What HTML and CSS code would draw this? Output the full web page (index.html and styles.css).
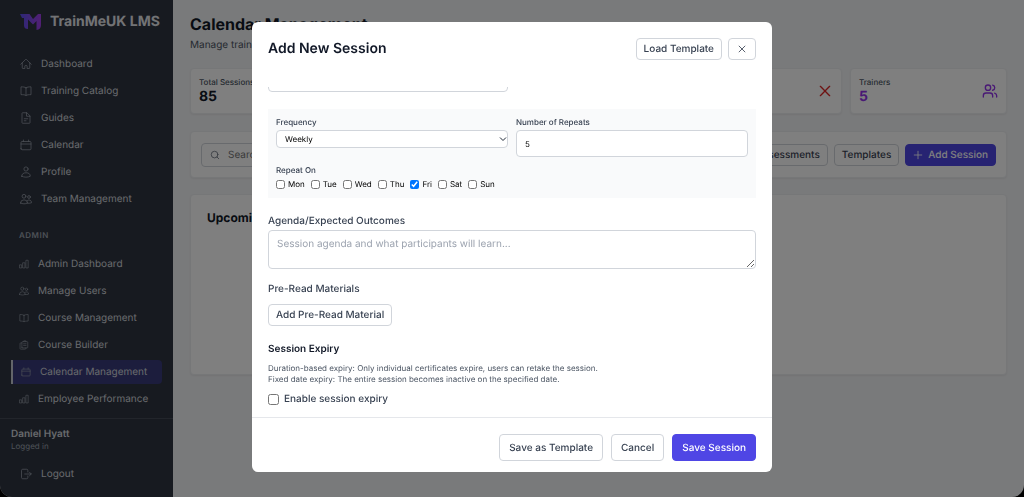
FILE: index.html
```
<!DOCTYPE html>
<html lang="en">
<head>
    <meta charset="UTF-8">
    <meta name="viewport" content="width=device-width, initial-scale=1.0">
    <title>TrainMeUK LMS - Calendar Management</title>
    <link rel="stylesheet" href="styles.css">
</head>
<body>
    <!-- Shared icon shapes -->
    <svg class="sprite" aria-hidden="true">
        <symbol id="i-home" viewBox="0 0 24 24"><path d="M1.500 12.500L11.300 2.800a1 1 0 0 1 1.400 0l9.800 9.700M4.500 9.800v10.100c0 .6.500 1.100 1.100 1.100h4.100v-4.900c0-.6.500-1.100 1.100-1.100h2.300c.6 0 1.100.5 1.100 1.100V21h4.200c.6 0 1.100-.5 1.100-1.100V9.800"/></symbol>
        <symbol id="i-book" viewBox="0 0 24 24"><path d="M12 5.500C10 4 6 3.700 2 3.700v15.600c4 0 8 .2 10 1.700 2-1.500 6-1.700 10-1.700V3.700c-4 0-8 .3-10 1.800zM12 5.500V21"/></symbol>
        <symbol id="i-doc" viewBox="0 0 24 24"><path d="M13 1.500H5.100C4.500 1.500 4 2 4 2.600v18.800c0 .6.500 1.100 1.100 1.100h13.800c.6 0 1.100-.5 1.100-1.100V8.500zM13 1.500v7h7M8.500 13.500h7M8.500 17.500H12"/></symbol>
        <symbol id="i-calendar" viewBox="0 0 24 24"><path d="M6.800 2V5M17.200 2V5M2 19.500V7a2 2 0 0 1 2-2h16a2 2 0 0 1 2 2v12.500a2 2 0 0 1-2 2H4a2 2 0 0 1-2-2zM2 10h20"/></symbol>
        <symbol id="i-user" viewBox="0 0 24 24"><circle cx="12" cy="6" r="4.200"/><path d="M3.500 20.500a8.500 7 0 0 1 17 0c-5 2.500-12 2.500-17 0z"/></symbol>
        <symbol id="i-team" viewBox="0 0 24 24"><circle cx="8" cy="6.500" r="3.800"/><circle cx="18" cy="8" r="2.800"/><path d="M1 20a7 6.300 0 0 1 14 0c-4.200 2.200-9.800 2.200-14 0zM15 20.500c3 .3 5.500 0 8-1a5 5 0 0 0-9-3.500"/></symbol>
        <symbol id="i-chart" viewBox="0 0 24 24"><path d="M2 14h4.500v7.500H2zM9.700 9h4.500v12.500H9.700zM17.500 3H22v18.500h-4.500z"/></symbol>
        <symbol id="i-clip" viewBox="0 0 24 24"><path d="M7 7H4C3.200 7 2.500 7.700 2.500 8.500v12c0 .8.700 1.500 1.500 1.500h11c.8 0 1.500-.7 1.500-1.500V19M7 17.500V5.500C7 4.700 7.700 4 8.500 4h11c.8 0 1.500.7 1.500 1.500v12c0 .8-.7 1.500-1.500 1.500h-11C7.700 19 7 18.300 7 17.500zM11.500 4V2h5v2M11 9h6M11 13h6"/></symbol>
        <symbol id="i-logout" viewBox="0 0 24 24"><path d="M15.700 8V4.700c0-1.200-1-2.200-2.200-2.200H5.300C4 2.500 3 3.500 3 4.700v14.600c0 1.200 1 2.200 2.300 2.200h8.200c1.200 0 2.200-1 2.200-2.200V16M9.500 12H22.500M19 8.500l3.500 3.500-3.500 3.500"/></symbol>
        <symbol id="i-search" viewBox="0 0 24 24"><circle cx="11" cy="11" r="8"/><path d="M21 21l-4.300-4.300"/></symbol>
        <symbol id="i-x" viewBox="0 0 24 24"><path d="M5 5l14 14M19 5L5 19"/></symbol>
        <symbol id="i-plus" viewBox="0 0 24 24"><path d="M12 3v18M3 12h18"/></symbol>
        <symbol id="i-users" viewBox="0 0 24 24"><circle cx="9" cy="7" r="4"/><path d="M16 21v-2a4 4 0 0 0-4-4H6a4 4 0 0 0-4 4v2M22 21v-2a4 4 0 0 0-3-3.900M16 3.100a4 4 0 0 1 0 7.800"/></symbol>
    </svg>

    <div class="app">
        <aside class="sidebar">
            <div class="brand">
                <svg class="logo" viewBox="0 0 22 18" aria-hidden="true">
                    <defs>
                        <linearGradient id="logoFill" x1="0" y1="0" x2="1" y2="0">
                            <stop offset="0" stop-color="#5b52ee"/>
                            <stop offset="1" stop-color="#a33fe8"/>
                        </linearGradient>
                    </defs>
                    <path fill="url(#logoFill)" d="M0 1h9.500l3.500 5 4.500-4.500c.5-.4 1-.5 1.500-.5h2v11c0 3-1.500 4.500-4.500 5V8l-3.500 3.500L8 6.500V16c-2.500 0-4-1-4-3.500V5H2z"/>
                </svg>
                <span>TrainMeUK LMS</span>
            </div>
            <nav class="nav">
                <a href="#"><svg class="icon"><use href="#i-home"/></svg>Dashboard</a>
                <a href="#"><svg class="icon"><use href="#i-book"/></svg>Training Catalog</a>
                <a href="#"><svg class="icon"><use href="#i-doc"/></svg>Guides</a>
                <a href="#"><svg class="icon"><use href="#i-calendar"/></svg>Calendar</a>
                <a href="#"><svg class="icon"><use href="#i-user"/></svg>Profile</a>
                <a href="#"><svg class="icon"><use href="#i-team"/></svg>Team Management</a>
            </nav>
            <h2 class="nav-title">ADMIN</h2>
            <nav class="nav nav-admin">
                <a href="#"><svg class="icon"><use href="#i-chart"/></svg>Admin Dashboard</a>
                <a href="#"><svg class="icon"><use href="#i-team"/></svg>Manage Users</a>
                <a href="#"><svg class="icon"><use href="#i-book"/></svg>Course Management</a>
                <a href="#"><svg class="icon"><use href="#i-clip"/></svg>Course Builder</a>
                <a href="#" class="active"><svg class="icon"><use href="#i-calendar"/></svg>Calendar Management</a>
                <a href="#"><svg class="icon"><use href="#i-chart"/></svg>Employee Performance</a>
            </nav>
            <div class="account">
                <div class="account-name">Daniel Hyatt</div>
                <div class="account-state">Logged in</div>
                <a href="#" class="logout"><svg class="icon"><use href="#i-logout"/></svg>Logout</a>
            </div>
        </aside>

        <main class="content">
            <h1 class="heading">Calendar Management</h1>
            <p class="subheading">Manage training sessions</p>
            <div class="stats">
                <div class="card stat">
                    <div><div class="stat-label">Total Sessions</div><div class="stat-value">85</div></div>
                </div>
                <div class="card stat"></div>
                <div class="card stat"></div>
                <div class="card stat">
                    <div></div>
                    <svg class="icon stat-icon red"><use href="#i-x"/></svg>
                </div>
                <div class="card stat">
                    <div><div class="stat-label">Trainers</div><div class="stat-value purple">5</div></div>
                    <svg class="icon stat-icon purple"><use href="#i-users"/></svg>
                </div>
            </div>
            <div class="card toolbar">
                <label class="search">
                    <svg class="icon"><use href="#i-search"/></svg>
                    <input type="search" placeholder="Search" aria-label="Search sessions">
                </label>
                <button class="btn">Assessments</button>
                <button class="btn">Templates</button>
                <button class="btn btn-primary"><svg class="icon"><use href="#i-plus"/></svg>Add Session</button>
            </div>
            <section class="card upcoming">
                <h2>Upcoming Sessions</h2>
            </section>
        </main>
    </div>

    <div class="overlay">
        <div class="modal" role="dialog" aria-labelledby="modalTitle">
            <header class="modal-header">
                <h2 id="modalTitle">Add New Session</h2>
                <button class="btn">Load Template</button>
                <button class="btn btn-close" aria-label="Close"><svg class="icon"><use href="#i-x"/></svg></button>
            </header>

            <form class="modal-body" id="sessionForm">
                <div class="columns">
                    <input type="text" class="field field-cut" aria-label="Location">
                </div>

                <div class="repeat-box">
                    <div class="columns">
                        <div>
                            <label class="small-label" for="frequency">Frequency</label>
                            <div class="select-wrap">
                                <select id="frequency" class="field">
                                    <option>Daily</option>
                                    <option selected>Weekly</option>
                                    <option>Monthly</option>
                                </select>
                                <svg class="chevron" viewBox="0 0 8 8" aria-hidden="true"><path d="M1 2.500l3 3 3-3"/></svg>
                            </div>
                        </div>
                        <div>
                            <label class="small-label" for="repeats">Number of Repeats</label>
                            <input type="text" inputmode="numeric" id="repeats" class="field" value="5">
                        </div>
                    </div>
                    <fieldset class="days">
                        <legend class="small-label">Repeat On</legend>
                        <label><input type="checkbox">Mon</label>
                        <label><input type="checkbox">Tue</label>
                        <label><input type="checkbox">Wed</label>
                        <label><input type="checkbox">Thu</label>
                        <label><input type="checkbox" checked>Fri</label>
                        <label><input type="checkbox">Sat</label>
                        <label><input type="checkbox">Sun</label>
                    </fieldset>
                </div>

                <div class="group">
                    <label class="label" for="agenda">Agenda/Expected Outcomes</label>
                    <textarea id="agenda" class="field" placeholder="Session agenda and what participants will learn..."></textarea>
                </div>

                <div class="group materials">
                    <div class="label">Pre-Read Materials</div>
                    <button type="button" class="btn">Add Pre-Read Material</button>
                </div>

                <div class="group">
                    <h3>Session Expiry</h3>
                    <p class="hint">Duration-based expiry: Only individual certificates expire, users can retake the session.<br>Fixed date expiry: The entire session becomes inactive on the specified date.</p>
                    <label class="expiry"><input type="checkbox">Enable session expiry</label>
                </div>
            </form>

            <footer class="modal-footer">
                <button class="btn btn-large">Save as Template</button>
                <button class="btn btn-large">Cancel</button>
                <button class="btn btn-large btn-primary" form="sessionForm">Save Session</button>
            </footer>
        </div>
    </div>
</body>
</html>
```
FILE: styles.css
```
* {
    box-sizing: border-box;
}

body {
    margin: 0;
    font-family: Inter, "Liberation Sans", sans-serif;
    font-size: 10px;
    line-height: 14px;
    text-rendering: geometricPrecision;
    color: #1f2937;
    background-color: #000;
    overflow: hidden;
}

h1, h2, h3, p {
    margin: 0;
}

button, input, select, textarea {
    font: inherit;
    color: inherit;
    text-rendering: inherit;
}

.sprite {
    display: none;
}

.icon {
    width: 12px;
    height: 12px;
    flex: none;
    fill: none;
    stroke: currentColor;
    stroke-width: 2;
    stroke-linecap: round;
    stroke-linejoin: round;
}

.app {
    display: flex;
    height: 100vh;
    background-color: #f3f4f6;
    border-radius: 0 0 12px 12px;
    overflow: hidden;
}

/* Sidebar */
.sidebar {
    width: 173px;
    flex: none;
    display: flex;
    flex-direction: column;
    background-color: #2e3440;
    color: #d1d5db;
}

.brand {
    display: flex;
    align-items: center;
    gap: 8px;
    padding: 0 12px 0 20px;
    height: 44px;
    font-size: 14px;
    font-weight: 700;
    color: #e5e7eb;
    white-space: nowrap;
}

.logo {
    width: 22px;
    height: 18px;
    flex: none;
}

.nav {
    display: flex;
    flex-direction: column;
    padding: 6px 11px 0;
}

.nav a, .logout {
    display: flex;
    align-items: center;
    gap: 9px;
    height: 27px;
    padding-left: 9px;
    color: inherit;
    text-decoration: none;
    white-space: nowrap;
}

.nav .icon, .logout .icon {
    color: #9ca3af;
    stroke-width: 1.5;
}

.nav-title {
    padding: 16px 19px 0;
    font-size: 8px;
    font-weight: 600;
    letter-spacing: 0.5px;
    color: #9ca3af;
}

.nav-admin {
    padding-top: 8px;
}

.nav-admin a {
    padding-left: 8px;
}

.nav-admin .icon {
    width: 10px;
    height: 10px;
}

.nav-admin .active {
    height: 24px;
    margin: 2px 0 1px;
    background-color: #383a7a;
    border-left: 2px solid #c7cbd3;
    border-radius: 0 4px 4px 0;
}

.account {
    flex: 1;
    margin-top: 6px;
    padding: 8px 11px;
    border-top: 1px solid #454b57;
}

.account-name {
    font-weight: 600;
}

.account-state {
    font-size: 8px;
    line-height: 10px;
    color: #9ca3af;
}

.logout {
    margin-top: 9px;
}

/* Page behind the modal */
.content {
    flex: 1;
    padding: 14px 17px 0;
}

.heading {
    font-size: 16px;
    line-height: 20px;
    font-weight: 700;
    color: #111827;
}

.subheading {
    padding-top: 4px;
    line-height: 14px;
    color: #4b5563;
}

.card {
    background-color: #fff;
    border: 1px solid #eceef1;
    border-radius: 4px;
    box-shadow: 0 1px 2px rgba(0, 0, 0, 0.06);
}

.stats {
    display: grid;
    grid-template-columns: repeat(5, 1fr);
    gap: 8px;
    margin-top: 16px;
}

.stat {
    display: flex;
    justify-content: space-between;
    align-items: center;
    height: 46px;
    padding: 0 8px;
}

.stat-label {
    font-size: 8px;
    line-height: 12px;
    font-weight: 500;
    color: #4b5563;
}

.stat-value {
    font-size: 14px;
    line-height: 18px;
    font-weight: 700;
    color: #111827;
}

.stat-icon {
    width: 16px;
    height: 16px;
}

.red {
    color: #dc2626;
}

.stat .purple {
    color: #9333ea;
}

.toolbar {
    display: flex;
    justify-content: flex-end;
    align-items: center;
    gap: 6px;
    height: 47px;
    margin-top: 17px;
    padding: 0 10px;
}

.search {
    display: flex;
    align-items: center;
    gap: 8px;
    flex: 1;
    height: 24px;
    padding: 0 8px;
    border: 1px solid #d1d5db;
    border-radius: 4px;
    color: #6b7280;
}

.search .icon {
    width: 10px;
    height: 10px;
}

.search input {
    flex: 1;
    min-width: 0;
    padding: 0;
    border: none;
    outline: none;
    background: none;
}

.upcoming {
    height: 181px;
    margin-top: 16px;
    padding: 16px 16px;
}

.upcoming h2 {
    font-size: 12px;
    color: #111827;
}

/* Buttons */
.btn {
    display: inline-flex;
    align-items: center;
    gap: 5px;
    height: 22px;
    padding: 0 7px;
    font-weight: 500;
    white-space: nowrap;
    color: #374151;
    background-color: #fff;
    border: 1px solid #d1d5db;
    border-radius: 4px;
    cursor: pointer;
}

.btn .icon {
    width: 10px;
    height: 10px;
}

.btn-primary {
    color: #fff;
    background-color: #4f46e5;
    border-color: #4f46e5;
}

.btn-large {
    height: 27px;
    padding: 0 9px;
}

/* Modal */
.overlay {
    position: fixed;
    inset: 0;
    display: flex;
    justify-content: center;
    align-items: center;
    padding: 22px 0 25px;
    background-color: rgba(0, 0, 0, 0.5);
}

.modal {
    display: flex;
    flex-direction: column;
    width: 520px;
    max-width: 100%;
    height: 100%;
    background-color: #fff;
    border-radius: 6px;
    overflow: hidden;
}

.modal-header {
    display: flex;
    align-items: center;
    gap: 6px;
    padding: 16px 16px 0;
}

.modal-header h2 {
    flex: 1;
    font-size: 14px;
    line-height: 16px;
    font-weight: 600;
    color: #111827;
}

.btn-close {
    padding: 0 8px;
}

.modal-body {
    flex: 1;
    min-height: 0;
    margin-top: 27px;
    padding: 0 16px;
    overflow: hidden;
}

.columns {
    display: grid;
    grid-template-columns: 1fr 1fr;
    gap: 8px;
}

.field {
    display: block;
    width: 100%;
    height: 27px;
    padding: 0 8px;
    background-color: #fff;
    border: 1px solid #d1d5db;
    border-radius: 4px;
}

/* Scrolled row, only its lower edge is left in view */
.field-cut {
    margin-top: -22px;
}

.repeat-box {
    margin-top: 17px;
    padding: 7px 8px 8px;
    background-color: #f9fafb;
}

.repeat-box .field {
    font-size: 8px;
    color: #000;
}

.small-label {
    display: block;
    padding: 0;
    margin-bottom: 2px;
    font-size: 8px;
    line-height: 12px;
    font-weight: 500;
    color: #374151;
}

.select-wrap {
    position: relative;
}

.repeat-box select {
    appearance: none;
    height: 18px;
}

.chevron {
    position: absolute;
    top: 5px;
    right: 1px;
    width: 8px;
    height: 8px;
    fill: none;
    stroke: #1f2937;
    pointer-events: none;
}

.days {
    display: flex;
    gap: 6px;
    margin: 7px 0 0;
    padding: 0;
    border: none;
    font-size: 8px;
    line-height: 12px;
    color: #000;
}

.days label, .expiry {
    display: flex;
    align-items: center;
    gap: 3px;
}

.days input {
    width: 9px;
    height: 9px;
    margin: 0;
}

.group {
    margin-top: 16px;
}

.label {
    display: block;
    margin-bottom: 2px;
    font-weight: 500;
    color: #374151;
}

textarea.field {
    height: 39px;
    padding: 6px 8px;
}

textarea::placeholder {
    color: #9ca3af;
}

.group h3 {
    font-size: 10px;
    font-weight: 600;
    color: #111827;
}

.materials {
    margin-top: 13px;
}

.materials .label {
    margin-bottom: 8px;
}

.hint {
    margin-top: 7px;
    font-size: 8px;
    line-height: 11px;
    color: #4b5563;
}

.expiry {
    gap: 5px;
    margin-top: 7px;
    font-weight: 500;
    color: #374151;
}

.expiry input {
    width: 11px;
    height: 11px;
    margin: 0;
}

.modal-footer {
    display: flex;
    justify-content: flex-end;
    gap: 8px;
    padding: 16px 16px 11px;
    border-top: 1px solid #e5e7eb;
}
```
